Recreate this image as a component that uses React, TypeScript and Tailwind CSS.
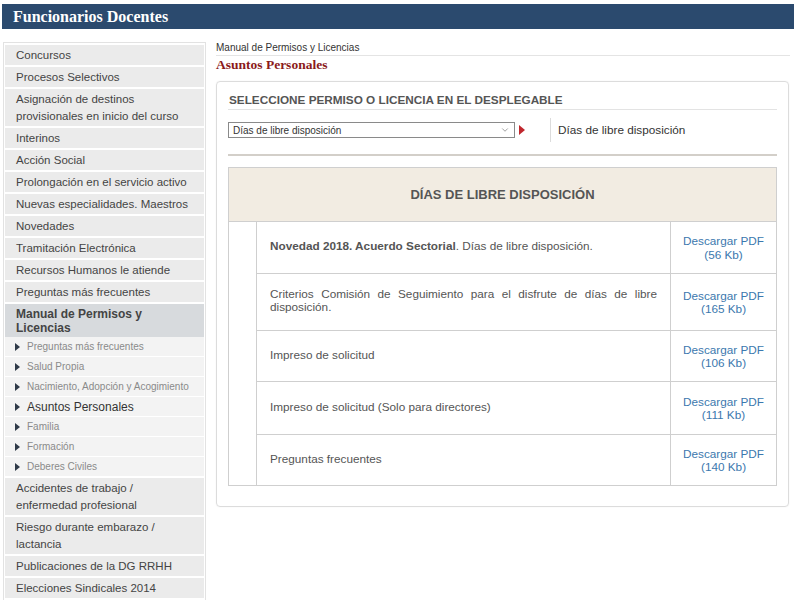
import { ChevronDown } from "lucide-react";

type NavItem = { label: string };

const topItems: NavItem[] = [
  { label: "Concursos" },
  { label: "Procesos Selectivos" },
  { label: "Asignación de destinos provisionales en inicio del curso" },
  { label: "Interinos" },
  { label: "Acción Social" },
  { label: "Prolongación en el servicio activo" },
  { label: "Nuevas especialidades. Maestros" },
  { label: "Novedades" },
  { label: "Tramitación Electrónica" },
  { label: "Recursos Humanos le atiende" },
  { label: "Preguntas más frecuentes" },
];

const subItems = [
  { label: "Preguntas más frecuentes" },
  { label: "Salud Propia" },
  { label: "Nacimiento, Adopción y Acogimiento" },
  { label: "Asuntos Personales", active: true },
  { label: "Familia" },
  { label: "Formación" },
  { label: "Deberes Civiles" },
];

const bottomItems: NavItem[] = [
  { label: "Accidentes de trabajo / enfermedad profesional" },
  { label: "Riesgo durante embarazo / lactancia" },
  { label: "Publicaciones de la DG RRHH" },
  { label: "Elecciones Sindicales 2014" },
  { label: "\u00a0" },
];

const docs = [
  { bold: "Novedad 2018. Acuerdo Sectorial", rest: ". Días de libre disposición.", size: "56 Kb", h: "h-[52px]" },
  { bold: "", rest: "Criterios Comisión de Seguimiento para el disfrute de días de libre disposición.", size: "165 Kb", h: "h-[57px]" },
  { bold: "", rest: "Impreso de solicitud", size: "106 Kb", h: "h-[51px]" },
  { bold: "", rest: "Impreso de solicitud (Solo para directores)", size: "111 Kb", h: "h-[53px]" },
  { bold: "", rest: "Preguntas frecuentes", size: "140 Kb", h: "h-[51px]" },
];

function Triangle() {
  return (
    <svg width="5" height="8" viewBox="0 0 5 8" className="shrink-0">
      <path d="M0 0 L5 4 L0 8 Z" fill="#2f3a48" />
    </svg>
  );
}

function SideItem({ item }: { item: NavItem }) {
  return (
    <div className="bg-[#ebebeb] px-[11px] py-[1.5px] text-[11.5px] leading-[17px] text-[#444]">
      {item.label}
    </div>
  );
}

function Sidebar() {
  return (
    <aside className="w-[203px] shrink-0 border border-[#e2e2e2] px-[1px] pt-[2px]">
      <div className="flex flex-col gap-[2px]">
        {topItems.map((it) => (
          <SideItem key={it.label} item={it} />
        ))}
        <div>
          <div className="bg-[#d7dadd] px-[11px] py-[2.5px] text-[12px] font-bold leading-[14px] text-[#444]">
            Manual de Permisos y Licencias
          </div>
          <div className="flex flex-col gap-[1px] bg-white">
            {subItems.map((s) => (
              <div key={s.label} className="flex h-[19px] items-center gap-[7px] bg-[#f3f3f3] pl-[10px]">
                <Triangle />
                <span
                  className={
                    s.active
                      ? "text-[12px] text-[#333]"
                      : "text-[10px] text-[#8a8a8a]"
                  }
                >
                  {s.label}
                </span>
              </div>
            ))}
          </div>
        </div>
        {bottomItems.map((it, i) => (
          <SideItem key={i} item={it} />
        ))}
      </div>
    </aside>
  );
}

function Content() {
  return (
    <main className="ml-[10px] w-[574px]">
      <div className="border-b border-[#e4e4e4] pb-[2px] text-[10px] leading-[11px] text-[#333]">
        Manual de Permisos y Licencias
      </div>
      <h1 className="mt-[1px] font-['Liberation_Serif',serif] text-[13.5px] font-bold leading-[16px] text-[#8b1a1a]">
        Asuntos Personales
      </h1>
      <section className="mt-[8px] w-[573px] rounded-[4px] border border-[#dcdcdc] px-[11px] pb-[20px] pt-[11px] shadow-[0_0_2px_rgba(0,0,0,0.06)]">
        <h2 className="border-b border-[#e3e3e3] pb-[2px] pl-[1px] text-[11.75px] font-bold leading-[14px] text-[#555]">
          SELECCIONE PERMISO O LICENCIA EN EL DESPLEGABLE
        </h2>
        <div className="mt-[8px] flex h-[24px] items-center">
          <div className="flex h-[16px] w-[287px] items-center justify-between border border-[#8a8a8a] pl-[4px] pr-[4px] text-[10px] text-[#333]">
            <span>Días de libre disposición</span>
            <ChevronDown size={10} strokeWidth={1.5} className="text-[#666]" />
          </div>
          <svg width="6" height="10" viewBox="0 0 6 10" className="ml-[4px]">
            <path d="M0 0 L6 5 L0 10 Z" fill="#c0272d" />
          </svg>
          <div className="ml-[25px] h-[24px] w-px bg-[#dcdcdc]" />
          <span className="ml-[7px] text-[11.75px] text-[#333]">Días de libre disposición</span>
        </div>
        <div className="mt-[12px] h-[2px] bg-[#d3cfc9]" />
        <table className="mt-[11px] w-full border-collapse text-[11.75px] text-[#555]">
          <thead>
            <tr>
              <th
                colSpan={3}
                className="h-[54px] border border-[#cfcfcf] bg-[#f2ece2] text-center text-[13px] font-bold text-[#555]"
              >
                DÍAS DE LIBRE DISPOSICIÓN
              </th>
            </tr>
          </thead>
          <tbody>
            {docs.map((d, i) => (
              <tr key={i} className={d.h}>
                {i === 0 && (
                  <td rowSpan={docs.length} className="w-[28px] border border-[#cfcfcf]" />
                )}
                <td className="border border-[#cfcfcf] px-[13px] pb-[4px] text-justify leading-[13px]">
                  {d.bold && <b>{d.bold}</b>}
                  {d.rest}
                </td>
                <td className="w-[106px] border border-[#cfcfcf] text-center leading-[13.5px] text-[#3b78ae]">
                  Descargar PDF
                  <br />({d.size})
                </td>
              </tr>
            ))}
          </tbody>
        </table>
      </section>
    </main>
  );
}

export default function App() {
  return (
    <div className="h-[600px] w-[794px] overflow-hidden bg-white font-['Liberation_Sans',Arial,sans-serif]">
      <header className="ml-[2px] mt-[4px] flex h-[25px] items-center bg-[#2b4a6e] pl-[11px] font-['Liberation_Serif',serif] text-[16px] font-bold text-white">
        Funcionarios Docentes
      </header>
      <div className="mt-[13px] flex pl-[3px]">
        <Sidebar />
        <Content />
      </div>
    </div>
  );
}
